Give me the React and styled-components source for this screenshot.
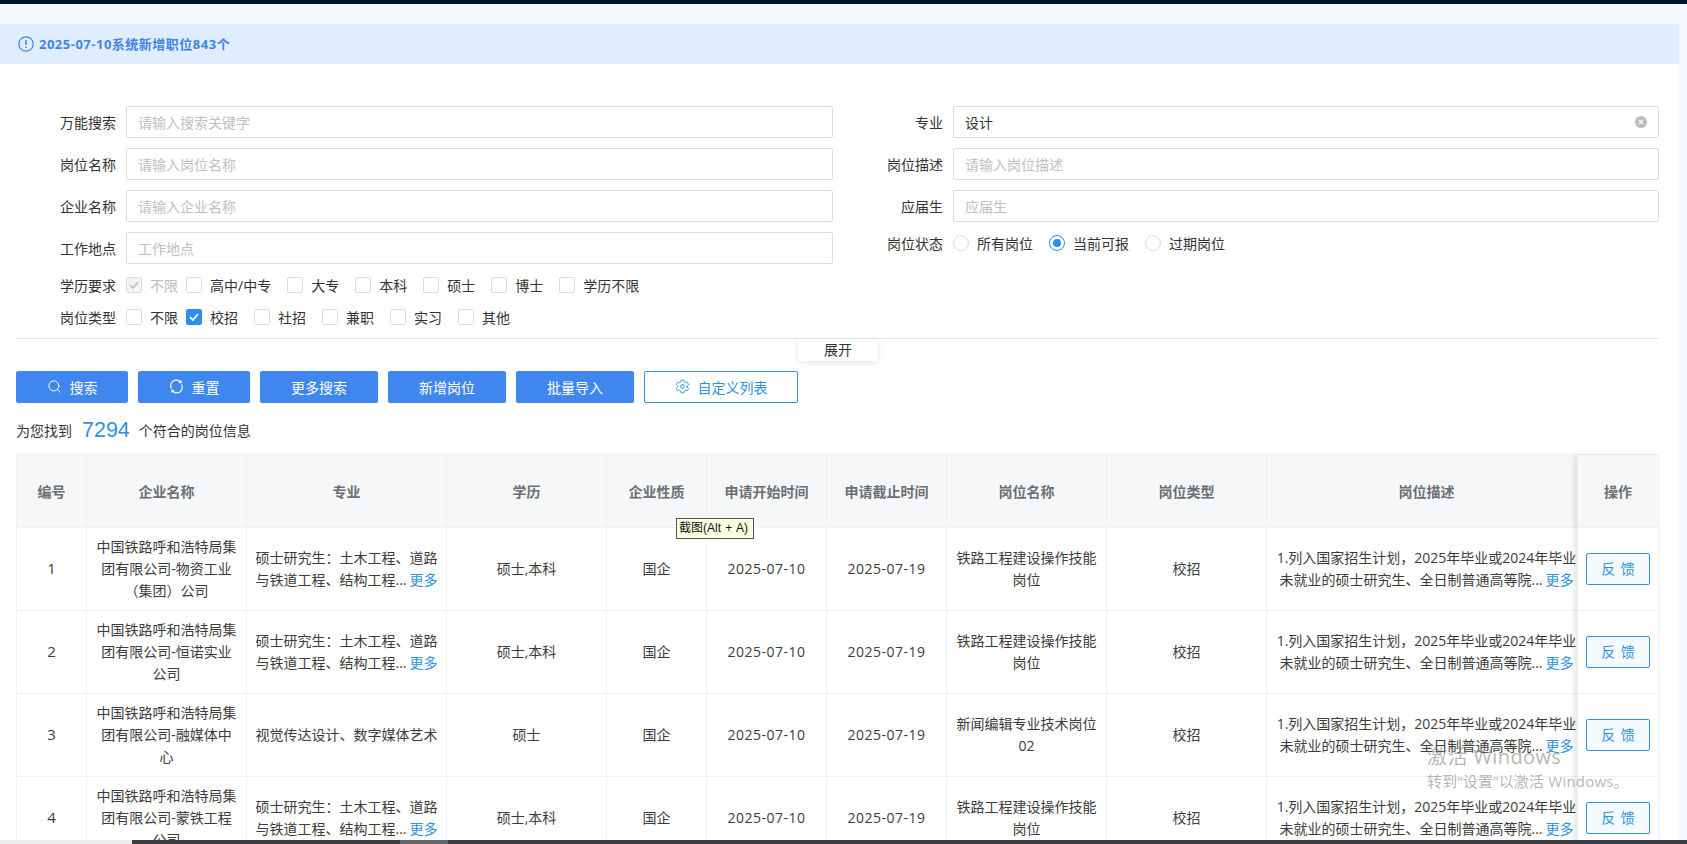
import React from 'react';
import styled, { createGlobalStyle } from 'styled-components';
import { Search } from 'lucide-react';
import { IoSettingsOutline } from 'react-icons/io5';

const GlobalStyle = createGlobalStyle`
  html, body {
    margin: 0;
    padding: 0;
    height: 100%;
    overflow: hidden;
    background: #f5f8ff;
    font-family: "Open Sans", "Noto Sans CJK SC", sans-serif;
    font-size: 14px;
    color: #333;
  }
  * { box-sizing: border-box; }
`;

const Page = styled.div`
  position: relative;
  width: 1687px;
  height: 844px;
  display: flex;
  flex-direction: column;
  overflow: hidden;
`;

const TopBar = styled.div`
  height: 4px;
  flex: none;
  background: #001529;
`;

const Main = styled.main`
  flex: 1;
  min-height: 0;
  width: 1679px;
  margin-top: 20px;
  background: #fff;
  overflow: hidden;
`;

const Notice = styled.div`
  height: 40px;
  background: #e0edff;
  color: #3f84e6;
  font-weight: 700;
  font-size: 13px;
  letter-spacing: 0.5px;
  display: flex;
  align-items: center;
  gap: 5px;
  padding: 0 0 1px 18px;
`;

const FormArea = styled.div`
  display: grid;
  grid-template-columns: 817px 816px;
  column-gap: 10px;
  padding: 42px 0 0 16px;
  height: 274px;
`;

const FormColumn = styled.div`
  display: flex;
  flex-direction: column;
`;

const FieldRow = styled.div`
  display: flex;
  align-items: center;
  flex: none;
  height: ${(p) => p.$height || 32}px;
  margin-bottom: ${(p) => p.$gap ?? 10}px;
`;

const Label = styled.label`
  width: 100px;
  flex: none;
  margin-right: 10px;
  padding-bottom: 1px;
  text-align: right;
  white-space: nowrap;
  color: #333;
`;

const InputBox = styled.div`
  flex: 1;
  height: 32px;
  border: 1px solid #dcdcdc;
  border-radius: 2px;
  padding: 0 11px 1px;
  display: flex;
  align-items: center;
  justify-content: space-between;
  color: ${(p) => (p.$filled ? '#333' : '#c0c0c0')};
`;

const ClearIcon = styled.svg`
  width: 12px;
  height: 12px;
`;

const CheckGroup = styled.div`
  display: flex;
  align-items: center;
  gap: 16px;
  & > :first-child { margin-right: ${(p) => (p.$tight ? -8 : 0)}px; }
`;

const CheckItem = styled.span`
  display: inline-flex;
  align-items: center;
  gap: 8px;
  color: ${(p) => (p.$disabled ? '#bdbdbd' : '#333')};
  white-space: nowrap;
`;

const Box = styled.span`
  width: 16px;
  height: 16px;
  border-radius: 2px;
  border: 1px solid ${(p) => (p.$checked ? '#2f8cf0' : '#dcdcdc')};
  background: ${(p) => (p.$checked ? '#2f8cf0' : p.$disabled ? '#f3f3f3' : '#fff')};
  display: inline-flex;
  align-items: center;
  justify-content: center;
`;

const RadioDot = styled.span`
  width: 16px;
  height: 16px;
  border-radius: 50%;
  border: 1px solid ${(p) => (p.$checked ? '#2f8cf0' : '#dcdcdc')};
  display: inline-flex;
  align-items: center;
  justify-content: center;
  &::after {
    content: '';
    width: 8px;
    height: 8px;
    border-radius: 50%;
    background: ${(p) => (p.$checked ? '#2f8cf0' : 'transparent')};
  }
`;

const Divider = styled.div`
  position: relative;
  height: 1px;
  margin: 0 20px 0 16px;
  background: #e4e4e4;
`;

const ExpandTab = styled.div`
  position: absolute;
  left: 782px;
  top: 1px;
  width: 80px;
  height: 22px;
  padding-bottom: 2px;
  background: #fff;
  border-radius: 0 0 3px 3px;
  box-shadow: 0 2px 6px rgba(0, 0, 0, 0.1);
  display: flex;
  align-items: center;
  justify-content: center;
  color: #333;
`;

const Toolbar = styled.div`
  display: flex;
  gap: 10px;
  padding: 32px 0 0 16px;
`;

const ActionButton = styled.button`
  width: ${(p) => p.$width}px;
  height: 32px;
  border-radius: 2px;
  border: 1px solid ${(p) => (p.$outline ? '#2e93d9' : '#3f87ee')};
  background: ${(p) => (p.$outline ? '#fff' : '#3f87ee')};
  color: ${(p) => (p.$outline ? '#2e93d9' : '#fff')};
  font: inherit;
  display: flex;
  align-items: center;
  justify-content: center;
  gap: 8px;
  padding: 0 0 1px;
`;

const ResultLine = styled.div`
  height: 51px;
  padding: 3px 0 0 16px;
  display: flex;
  align-items: center;
  color: #333;
`;

const ResultCount = styled.span`
  font-size: 21.5px;
  color: #2e93d9;
  margin: 0 9px 0 10px;
  font-family: "Liberation Sans", sans-serif;
`;

const TableWrap = styled.div`
  display: flex;
  width: 1643px;
  margin-left: 16px;
  border-top: 1px solid #eef0f2;
`;

const ScrollPart = styled.div`
  flex: 1;
  min-width: 0;
  overflow: hidden;
`;

const FixedPart = styled.div`
  flex: none;
  width: 82px;
  background: #fff;
  position: relative;
  box-shadow: -3px 0 5px rgba(0, 0, 0, 0.1);
`;

const Table = styled.table`
  border-collapse: collapse;
  table-layout: fixed;
  width: ${(p) => p.$width}px;
`;

const Th = styled.th`
  height: 72px;
  background: #f5f7f9;
  border: 1px solid #eef0f2;
  border-top: 0;
  color: #6b6f75;
  font-weight: 700;
  font-size: 14px;
  text-align: center;
  padding: 0;
`;

const Td = styled.td`
  height: 83px;
  border: 1px solid #eef0f2;
  text-align: center;
  line-height: 22px;
  padding: 0 ${(p) => p.$pad ?? 8}px;
  color: #3c3c3c;
  overflow: hidden;
`;

const DateText = styled.span`
  letter-spacing: 0.5px;
`;

const RowNumber = styled.span`
  font-size: 15px;
`;

const MoreLink = styled.span`
  color: #2e93d9;
  margin-left: 3px;
`;

const OneLine = styled.div`
  white-space: nowrap;
`;

const FeedbackButton = styled.button`
  width: 64px;
  height: 32px;
  border: 1px solid #2e93d9;
  border-radius: 2px;
  background: #f4faff;
  color: #2e93d9;
  font: inherit;
  padding: 0;
  word-spacing: 2px;
`;

const ShotTip = styled.div`
  position: absolute;
  left: 676px;
  top: 518px;
  width: 78px;
  height: 21px;
  background: #ffffe1;
  border: 1px solid #555;
  font-family: "Liberation Sans", "Noto Sans CJK SC", sans-serif;
  font-size: 12px;
  line-height: 19px;
  padding-left: 2px;
  color: #111;
  white-space: nowrap;
  word-spacing: 1px;
`;

const Watermark = styled.div`
  position: absolute;
  left: 1427px;
  top: 744px;
  color: rgba(120, 120, 120, 0.55);
  pointer-events: none;
  white-space: nowrap;
`;

const WatermarkTitle = styled.div`
  font-size: 20px;
  line-height: 26px;
  letter-spacing: 0.4px;
`;

const WatermarkSub = styled.div`
  font-size: 15px;
  line-height: 20px;
  letter-spacing: 0.2px;
  margin-top: 1px;
`;

const BottomBar = styled.div`
  flex: none;
  height: 4px;
  display: flex;
  background: #3b3d42;
`;

const BarPiece = styled.div`
  width: ${(p) => p.$width}px;
  background: ${(p) => p.$color};
`;

const columns = [
  { title: '编号', width: 70 },
  { title: '企业名称', width: 160 },
  { title: '专业', width: 200 },
  { title: '学历', width: 160 },
  { title: '企业性质', width: 100 },
  { title: '申请开始时间', width: 120 },
  { title: '申请截止时间', width: 120 },
  { title: '岗位名称', width: 160 },
  { title: '岗位类型', width: 160 },
  { title: '岗位描述', width: 320 },
];

const civil = ['硕士研究生：土木工程、道路', '与铁道工程、结构工程...'];
const rail = '铁路工程建设操作技能岗位';

const rows = [
  { id: 1, company: '中国铁路呼和浩特局集团有限公司-物资工业（集团）公司', major: civil, edu: '硕士,本科', job: rail },
  { id: 2, company: '中国铁路呼和浩特局集团有限公司-恒诺实业公司', major: civil, edu: '硕士,本科', job: rail },
  { id: 3, company: '中国铁路呼和浩特局集团有限公司-融媒体中心', major: null, edu: '硕士', job: '新闻编辑专业技术岗位02' },
  { id: 4, company: '中国铁路呼和浩特局集团有限公司-蒙铁工程公司', major: civil, edu: '硕士,本科', job: rail },
];

const leftFields = [
  ['万能搜索', '请输入搜索关键字'],
  ['岗位名称', '请输入岗位名称'],
  ['企业名称', '请输入企业名称'],
  ['工作地点', '工作地点'],
];

const rightFields = [
  ['专业', '设计', true],
  ['岗位描述', '请输入岗位描述'],
  ['应届生', '应届生'],
];

const CheckMark = ({ color }) => (
  <svg width='12' height='12' viewBox='0 0 12 12' fill='none'>
    <path d='M2 6.2 5 9l5-6' stroke={color} strokeWidth='1.8' />
  </svg>
);

const ResetIcon = () => (
  <svg width='15' height='15' viewBox='0 0 16 16' fill='none' stroke='#fff' strokeWidth='1.3'>
    <path d='M2.6 10.2A6 6 0 0 1 12.6 3.6' />
    <path d='M13.4 5.8A6 6 0 0 1 3.4 12.4' />
    <path d='M12.9 1.6v2.4h-2.4M3.1 14.4V12h2.4' />
  </svg>
);

const Option = ({ label, checked, disabled }) => (
  <CheckItem $disabled={disabled}>
    <Box $checked={checked} $disabled={disabled}>
      {checked && <CheckMark color='#fff' />}
      {disabled && <CheckMark color='#bdbdbd' />}
    </Box>
    {label}
  </CheckItem>
);

const Radio = ({ label, checked }) => (
  <CheckItem>
    <RadioDot $checked={checked} />
    {label}
  </CheckItem>
);

const App = () => (
  <Page>
    <GlobalStyle />
    <TopBar />
    <Main>
      <Notice>
        <svg width='16' height='16' viewBox='0 0 16 16' fill='none'>
          <circle cx='8' cy='8' r='7.2' stroke='#3f84e6' strokeWidth='1.2' />
          <path d='M8 4v5M8 10.6v1.4' stroke='#3f84e6' strokeWidth='1.5' />
        </svg>
        2025-07-10系统新增职位843个
      </Notice>
      <FormArea>
        <FormColumn>
          {leftFields.map(([label, hint]) => (
            <FieldRow key={label}>
              <Label>{label}</Label>
              <InputBox>{hint}</InputBox>
            </FieldRow>
          ))}
          <FieldRow $height={22} $gap={10}>
            <Label>学历要求</Label>
            <CheckGroup $tight>
              <Option label='不限' disabled />
              {['高中/中专', '大专', '本科', '硕士', '博士', '学历不限'].map((t) => (
                <Option key={t} label={t} />
              ))}
            </CheckGroup>
          </FieldRow>
          <FieldRow $height={22} $gap={0}>
            <Label>岗位类型</Label>
            <CheckGroup $tight>
              <Option label='不限' />
              <Option label='校招' checked />
              {['社招', '兼职', '实习', '其他'].map((t) => (
                <Option key={t} label={t} />
              ))}
            </CheckGroup>
          </FieldRow>
        </FormColumn>
        <FormColumn>
          {rightFields.map(([label, text, filled]) => (
            <FieldRow key={label}>
              <Label>{label}</Label>
              <InputBox $filled={filled}>
                {text}
                {filled && (
                  <ClearIcon viewBox='0 0 12 12'>
                    <circle cx='6' cy='6' r='6' fill='#bdbdbd' />
                    <path d='M4 4l4 4M8 4l-4 4' stroke='#fff' strokeWidth='1.1' />
                  </ClearIcon>
                )}
              </InputBox>
            </FieldRow>
          ))}
          <FieldRow $height={22} $gap={0}>
            <Label>岗位状态</Label>
            <CheckGroup>
              <Radio label='所有岗位' />
              <Radio label='当前可报' checked />
              <Radio label='过期岗位' />
            </CheckGroup>
          </FieldRow>
        </FormColumn>
      </FormArea>
      <Divider>
        <ExpandTab>展开</ExpandTab>
      </Divider>
      <Toolbar>
        <ActionButton $width={112}>
          <Search size={15} strokeWidth={1.6} />
          搜索
        </ActionButton>
        <ActionButton $width={112}>
          <ResetIcon />
          重置
        </ActionButton>
        <ActionButton $width={118}>更多搜索</ActionButton>
        <ActionButton $width={118}>新增岗位</ActionButton>
        <ActionButton $width={118}>批量导入</ActionButton>
        <ActionButton $width={154} $outline>
          <IoSettingsOutline size={15} />
          自定义列表
        </ActionButton>
      </Toolbar>
      <ResultLine>
        为您找到
        <ResultCount>7294</ResultCount>
        个符合的岗位信息
      </ResultLine>
      <TableWrap>
        <ScrollPart>
          <Table $width={1570}>
            <colgroup>
              {columns.map((c) => (
                <col key={c.title} width={c.width} />
              ))}
            </colgroup>
            <thead>
              <tr>
                {columns.map((c) => (
                  <Th key={c.title}>{c.title}</Th>
                ))}
              </tr>
            </thead>
            <tbody>
              {rows.map((r) => (
                <tr key={r.id}>
                  <Td>
                    <RowNumber>{r.id}</RowNumber>
                  </Td>
                  <Td $pad={8}>{r.company}</Td>
                  <Td $pad={5}>
                    {r.major ? (
                      <>
                        <OneLine>{r.major[0]}</OneLine>
                        <OneLine>
                          {r.major[1]}
                          <MoreLink>更多</MoreLink>
                        </OneLine>
                      </>
                    ) : (
                      '视觉传达设计、数字媒体艺术'
                    )}
                  </Td>
                  <Td>{r.edu}</Td>
                  <Td>国企</Td>
                  <Td>
                    <DateText>2025-07-10</DateText>
                  </Td>
                  <Td>
                    <DateText>2025-07-19</DateText>
                  </Td>
                  <Td>{r.job}</Td>
                  <Td>校招</Td>
                  <Td $pad={0}>
                    <OneLine>1.列入国家招生计划，2025年毕业或2024年毕业</OneLine>
                    <OneLine>
                      未就业的硕士研究生、全日制普通高等院...
                      <MoreLink>更多</MoreLink>
                    </OneLine>
                  </Td>
                </tr>
              ))}
            </tbody>
          </Table>
        </ScrollPart>
        <FixedPart>
          <Table $width={82}>
            <thead>
              <tr>
                <Th>操作</Th>
              </tr>
            </thead>
            <tbody>
              {rows.map((r) => (
                <tr key={r.id}>
                  <Td $pad={0}>
                    <FeedbackButton>反 馈</FeedbackButton>
                  </Td>
                </tr>
              ))}
            </tbody>
          </Table>
        </FixedPart>
      </TableWrap>
    </Main>
    <BottomBar>
      <BarPiece $width={132} $color='#eeeeee' />
      <BarPiece $width={268} $color='#3b3d42' />
      <BarPiece $width={48} $color='#66676c' />
    </BottomBar>
    <ShotTip>截图(Alt + A)</ShotTip>
    <Watermark>
      <WatermarkTitle>激活 Windows</WatermarkTitle>
      <WatermarkSub>转到“设置”以激活 Windows。</WatermarkSub>
    </Watermark>
  </Page>
);

export default App;
